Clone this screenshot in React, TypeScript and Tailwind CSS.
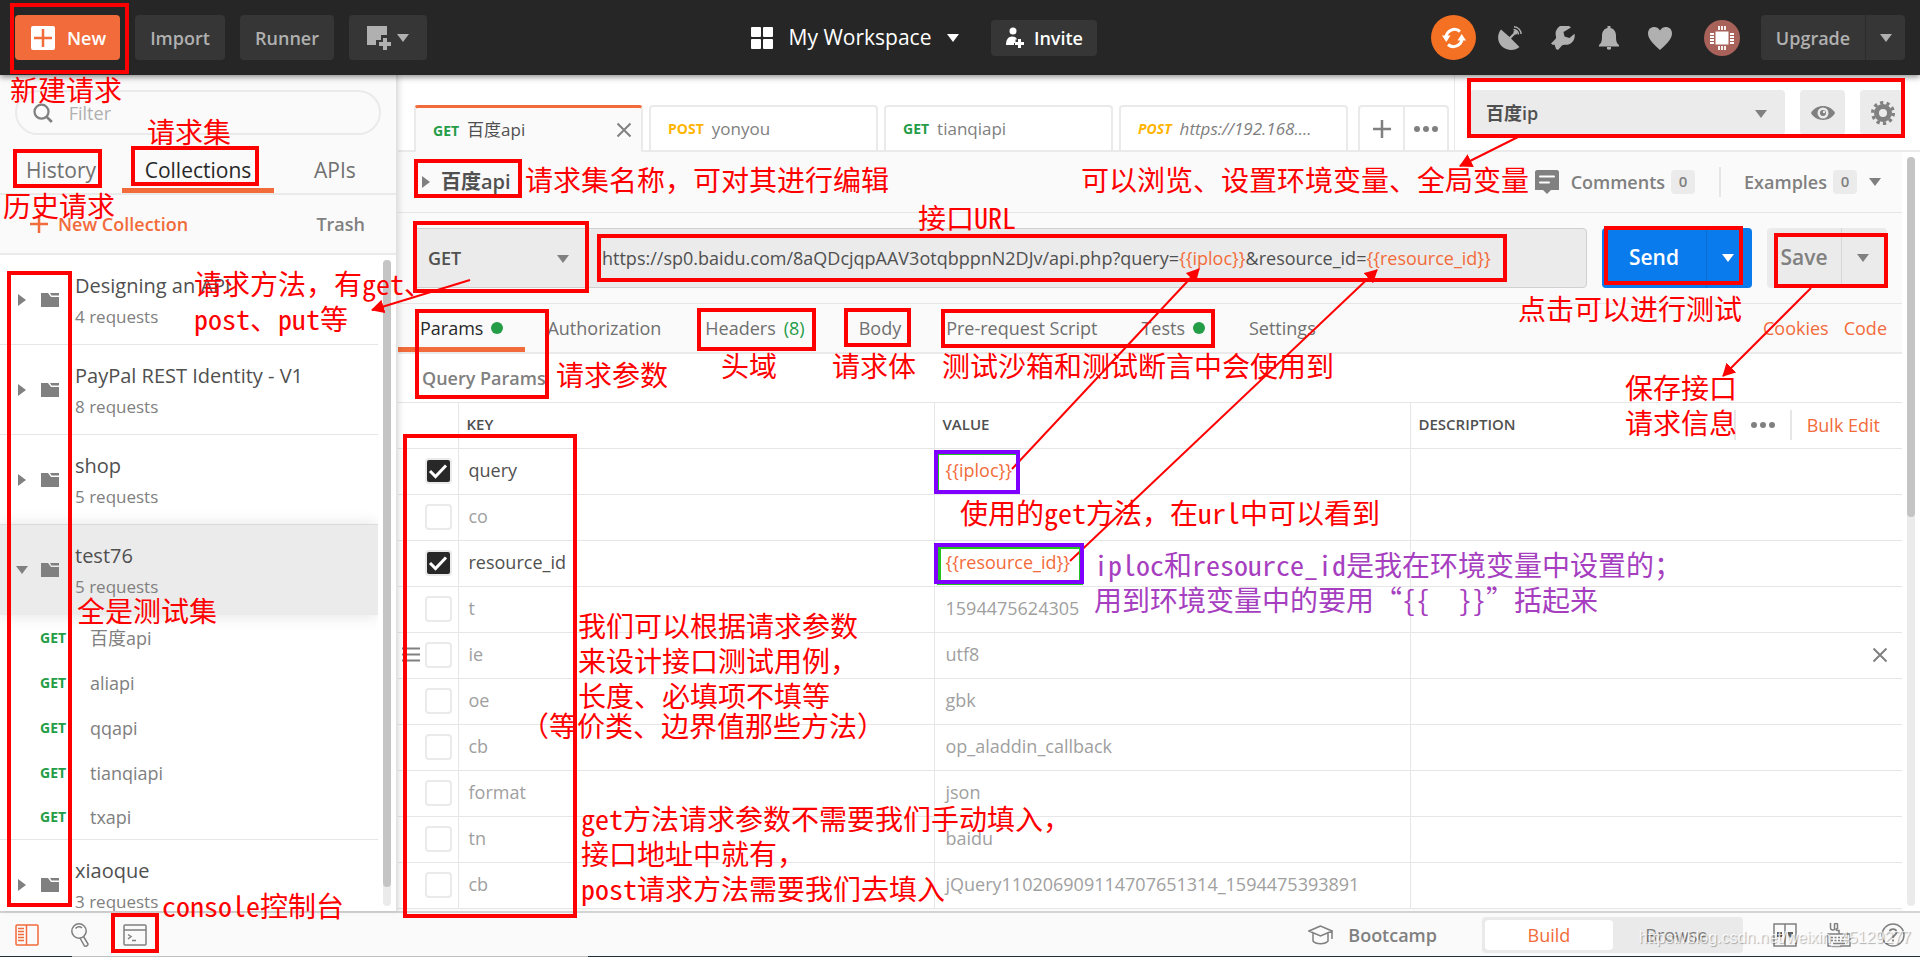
import { useState } from "react";
import type { ReactNode } from "react";

interface Collection {
    name: string;
    count: number;
    open?: boolean;
    requests?: string[];
}

interface Param {
    name: string;
    value: string;
    enabled?: boolean;
    active?: boolean;
}

interface Note {
    pos: string;
    lines: string[];
    tone?: string;
}

const collections: Collection[] = [
    { name: "Designing an API", count: 4 },
    { name: "PayPal REST Identity - V1", count: 8 },
    { name: "shop", count: 5 },
    { name: "test76", count: 5, open: true, requests: ["百度api", "aliapi", "qqapi", "tianqiapi", "txapi"] },
    { name: "xiaoque", count: 3 },
];

const initialParams: Param[] = [
    { name: "query", value: "{{iploc}}", enabled: true },
    { name: "co", value: "" },
    { name: "resource_id", value: "{{resource_id}}", enabled: true },
    { name: "t", value: "1594475624305" },
    { name: "ie", value: "utf8", active: true },
    { name: "oe", value: "gbk" },
    { name: "cb", value: "op_aladdin_callback" },
    { name: "format", value: "json" },
    { name: "tn", value: "baidu" },
    { name: "cb", value: "jQuery110206909114707651314_1594475393891" },
];

const notes: Note[] = [
    { pos: "left-[10px] top-[72px]", lines: ["新建请求"] },
    { pos: "left-[147px] top-[114px]", lines: ["请求集"] },
    { pos: "left-[3px] top-[188px]", lines: ["历史请求"] },
    { pos: "left-[525px] top-[162px]", lines: ["请求集名称，可对其进行编辑"] },
    { pos: "left-[1081px] top-[162px]", lines: ["可以浏览、设置环境变量、全局变量"] },
    { pos: "left-[918px] top-[200px]", lines: ["接口URL"] },
    { pos: "left-[194px] top-[266px]", lines: ["请求方法，有get、", "post、put等"] },
    { pos: "left-[556px] top-[357px]", lines: ["请求参数"] },
    { pos: "left-[721px] top-[348px]", lines: ["头域"] },
    { pos: "left-[832px] top-[348px]", lines: ["请求体"] },
    { pos: "left-[942px] top-[348px]", lines: ["测试沙箱和测试断言中会使用到"] },
    { pos: "left-[1518px] top-[291px]", lines: ["点击可以进行测试"] },
    { pos: "left-[1625px] top-[370px]", lines: ["保存接口", "请求信息"] },
    { pos: "left-[77px] top-[593px]", lines: ["全是测试集"] },
    { pos: "left-[960px] top-[495px]", lines: ["使用的get方法，在url中可以看到"] },
    { pos: "left-[1094px] top-[547px]", lines: ["iploc和resource_id是我在环境变量中设置的；", "用到环境变量中的要用“{{  }}”括起来"], tone: "text-[#a63fbf]" },
    { pos: "left-[578px] top-[608px]", lines: ["我们可以根据请求参数", "来设计接口测试用例，", "长度、必填项不填等"] },
    { pos: "left-[521px] top-[708px]", lines: ["（等价类、边界值那些方法）"] },
    { pos: "left-[581px] top-[801px]", lines: ["get方法请求参数不需要我们手动填入，", "接口地址中就有，", "post请求方法需要我们去填入"] },
    { pos: "left-[162px] top-[888px]", lines: ["console控制台"] },
];

// outer edges: left, top, right, bottom
const boxes = [
    [10, 3, 129, 74],
    [13, 149, 102, 188],
    [131, 146, 259, 186],
    [7, 271, 72, 907],
    [1467, 78, 1905, 138],
    [414, 159, 522, 198],
    [413, 221, 589, 293],
    [597, 234, 1507, 282],
    [415, 309, 549, 399],
    [697, 308, 816, 351],
    [844, 308, 911, 347],
    [941, 309, 1215, 348],
    [1604, 226, 1743, 285],
    [1774, 233, 1888, 288],
    [403, 434, 577, 918],
    [111, 913, 159, 953],
];

const arrows = [
    [1518, 137, 1460, 166],
    [470, 280, 372, 310],
    [1811, 288, 1723, 376],
    [1012, 469, 1199, 269],
    [1070, 561, 1377, 270],
];

function CaretDown({ className }: { className?: string }) {
    return (
        <svg width="12" height="8" viewBox="0 0 12 8" className={className} aria-hidden="true">
            <path d="M0 0h12L6 8z" fill="currentColor" />
        </svg>
    );
}

function CaretRight() {
    return (
        <svg width="8" height="12" viewBox="0 0 8 12" className="text-[#808080]" aria-hidden="true">
            <path d="M0 0v12l8-6z" fill="currentColor" />
        </svg>
    );
}

function CloseIcon() {
    return (
        <svg width="16" height="16" viewBox="0 0 16 16" fill="none" stroke="#808080" strokeWidth="2" aria-hidden="true">
            <path d="M1.500 1.500l13 13M14.500 1.500l-13 13" />
        </svg>
    );
}

function Dots() {
    return (
        <svg width="24" height="6" viewBox="0 0 24 6" fill="#808080" aria-hidden="true">
            <circle cx="3" cy="3" r="3" />
            <circle cx="12" cy="3" r="3" />
            <circle cx="21" cy="3" r="3" />
        </svg>
    );
}

function FolderIcon() {
    return (
        <svg width="18" height="14" viewBox="0 0 18 14" fill="#808080" aria-hidden="true">
            <path d="M0 0h7l3 4h8v10H0z" />
            <path d="M9 0h9v2.500h-7.500z" />
        </svg>
    );
}

function Header() {
    const dark = "flex items-center justify-center rounded bg-[#363636] font-semibold text-[#b0b0b0]";
    return (
        <header className="relative z-20 grid h-[75px] shrink-0 grid-cols-[1fr_auto_1fr] items-center bg-[#262626] px-[15px] text-lg shadow-[0_2px_6px_rgba(0,0,0,0.45)]">
            <div className="flex gap-[15px]">
                <button className="flex h-[45px] w-[105px] items-center gap-3 rounded bg-[#f26b3a] pl-4 font-semibold text-white">
                    <svg width="24" height="24" viewBox="0 0 24 24" aria-hidden="true">
                        <rect width="24" height="24" rx="2" fill="#fff" />
                        <path d="M12 3v18M3 12h18" stroke="#f26b3a" strokeWidth="2.500" />
                    </svg>
                    New
                </button>
                <button className={`${dark} h-[45px] w-[90px]`}>Import</button>
                <button className={`${dark} h-[45px] w-[94px]`}>Runner</button>
                <button aria-label="New window" className={`${dark} h-[45px] w-[78px] gap-1.5`}>
                    <svg width="24" height="24" viewBox="0 0 24 24" fill="#b0b0b0" aria-hidden="true">
                        <path d="M0 0h20v9h-6v5H9v5H0z" />
                        <path d="M16 12h4v4h4v4h-4v4h-4v-4h-4v-4h4z" />
                    </svg>
                    <CaretDown />
                </button>
            </div>

            <div className="mr-[72px] flex items-center">
                <button className="flex items-center gap-4 text-[21px] text-white">
                    <svg width="22" height="22" viewBox="0 0 22 22" fill="#fff" aria-hidden="true">
                        <rect width="10" height="10" rx="1" />
                        <rect x="12" width="10" height="10" rx="1" />
                        <rect y="12" width="10" height="10" rx="1" />
                        <rect x="12" y="12" width="10" height="10" rx="1" />
                    </svg>
                    My Workspace
                    <CaretDown />
                </button>
                <button className="ml-8 flex h-9 w-[106px] items-center justify-center gap-2.5 rounded bg-[#363636] font-semibold text-white">
                    <svg width="18" height="22" viewBox="0 0 18 22" fill="#fff" aria-hidden="true">
                        <circle cx="7" cy="4" r="3.500" />
                        <path d="M0 18c0-5 2-8.500 6-8.500 3 0 4.500 1 5 3H9.500v3.500H8V18z" />
                        <path d="M12 12h3v3h3v3h-3v3h-3v-3H9v-3h3z" />
                    </svg>
                    Invite
                </button>
            </div>

            <div className="flex items-center justify-end text-[#b0b0b0]">
                <button aria-label="Sync" className="flex h-[45px] w-[45px] items-center justify-center rounded-full bg-[#f47023]">
                    <svg width="24" height="24" viewBox="0 0 24 24" fill="none" stroke="#fff" strokeWidth="3" aria-hidden="true">
                        <path d="M4 11a8.500 8.500 0 0 1 14-5.500M20 13a8.500 8.500 0 0 1-14 5.500" />
                        <path d="M15.500 14.500H24l-4.300-6.500zM0 9.500h8.500L4.300 16z" fill="#fff" stroke="none" />
                    </svg>
                </button>
                <button aria-label="Capture" className="ml-[22px]">
                    <svg width="24" height="24" viewBox="0 0 24 24" fill="currentColor" aria-hidden="true">
                        <path d="M3 3.500C-1 8-1 16 4 20.500s13 4.500 17.500.500L13 12.500l4-4a2 2 0 1 0-1.500-1.500l-4 4z" />
                        <path d="M15.500 3.500a5.500 5.500 0 0 1 5 5M16 .8a8 8 0 0 1 7.200 7.200" fill="none" stroke="currentColor" strokeWidth="1.500" />
                    </svg>
                </button>
                <button aria-label="Settings" className="ml-[29px]">
                    <svg width="24" height="24" viewBox="0 0 24 24" fill="currentColor" aria-hidden="true">
                        <path d="M20 1.500A9 9 0 0 0 5 10.500c.2 1.200 0 2-1 3L0 17.500 2 19l1.500-.500L5 23l2 1 4-4.500c1-.800 2-.800 3-.700a9 9 0 0 0 9.500-11l-5 4.200-5-1.500-1-4.500z" />
                    </svg>
                </button>
                <button aria-label="Notifications" className="ml-6">
                    <svg width="20" height="24" viewBox="0 0 20 24" fill="currentColor" aria-hidden="true">
                        <path d="M8.500 0h3v2c4 1 5.500 4 5.500 8 0 5 .500 7 3 9v1.500H0V19c2.500-2 3-4 3-9 0-4 1.500-7 5.500-8zM8 21h4v2c-1 1-3 1-4 0z" />
                    </svg>
                </button>
                <button aria-label="Favourites" className="ml-7">
                    <svg width="26" height="24" viewBox="0 0 26 24" fill="currentColor" aria-hidden="true">
                        <path d="M13 24C9 20 1 14 1 7.500 1 0 10-1 13 4.500 16-1 25 0 25 7.500 25 14 17 20 13 24z" />
                    </svg>
                </button>
                <button aria-label="Account" className="ml-[31px] flex h-9 w-9 items-center justify-center rounded-full bg-[#a8625a]">
                    <svg width="24" height="24" viewBox="0 0 24 24" fill="#fff" stroke="#fff" strokeWidth="2" aria-hidden="true">
                        <rect x="6.500" y="6.500" width="11" height="11" />
                        <path d="M9 0v4M12 0v4M15 0v4M9 20v4M12 20v4M15 20v4M0 8h4M0 11h4M0 14h4M0 17h4M20 8h4M20 11h4M20 14h4M20 17h4" strokeWidth="1.800" />
                    </svg>
                </button>
                <div className="ml-[21px] flex h-[45px] rounded bg-[#363636]">
                    <button className="w-[105px] border-r border-[#2b2b2b] font-semibold">Upgrade</button>
                    <button aria-label="Upgrade options" className="flex w-[39px] items-center justify-center">
                        <CaretDown />
                    </button>
                </div>
            </div>
        </header>
    );
}

function CollectionRow({ item }: { item: Collection }) {
    return (
        <li className="border-b border-[#e6e6e6] last:border-b-0">
            <button
                className={
                    item.open
                        ? "relative flex h-[90px] w-full items-center bg-[#ebebeb] text-left shadow-[0_0_16px_rgba(0,0,0,0.12)]"
                        : "flex h-[89px] w-full items-center text-left"
                }
            >
                <span className="mr-[13px] ml-4 flex w-3 justify-center text-[#808080]">
                    {item.open ? <CaretDown /> : <CaretRight />}
                </span>
                <span className="w-[34px]">
                    <FolderIcon />
                </span>
                <span className="flex flex-col gap-px pt-[3px]">
                    <span className="text-[20px] leading-[30px] text-[#505050]">{item.name}</span>
                    <span className="text-[17px] leading-[30px] text-[#808080]">{item.count} requests</span>
                </span>
            </button>
            {item.requests && (
                <ul>
                    {item.requests.map((name) => (
                        <li key={name} className="flex h-[45px] items-center text-lg text-[#808080] last:h-11">
                            <span className="w-[90px] pl-10 text-[14px] font-bold text-[#249d47]">GET</span>
                            <a href="#request">{name}</a>
                        </li>
                    ))}
                </ul>
            )}
        </li>
    );
}

function Sidebar() {
    return (
        <aside className="relative z-10 flex w-[398px] shrink-0 flex-col border-r-2 border-[#e2e2e2] bg-[#fafafa] shadow-[2px_0_5px_rgba(0,0,0,0.1)]">
            <div className="px-[15px] pt-[15px]">
                <label className="flex h-[45px] items-center gap-4 rounded-full border-2 border-[#eaeaea] pl-4">
                    <svg width="22" height="22" viewBox="0 0 22 22" fill="none" stroke="#808080" strokeWidth="2.500" aria-hidden="true">
                        <circle cx="9.500" cy="9.500" r="7.800" />
                        <path d="M15 15l6 6" strokeWidth="3" />
                    </svg>
                    <input aria-label="Filter" placeholder="Filter" className="w-full bg-transparent text-lg outline-none placeholder:text-[#b0b0b0]" />
                </label>
            </div>
            <nav className="grid h-[60px] grid-cols-[1fr_152px_1fr] border-b-2 border-[#eaeaea] text-[21px] text-[#707070]">
                <button className="pt-3.5">History</button>
                <button className="border-b-[5px] border-[#f26b3a] pt-[18px] text-[#282828]">Collections</button>
                <button className="pt-3.5">APIs</button>
            </nav>
            <div className="flex h-[60px] shrink-0 items-center justify-between border-b-2 border-[#eaeaea] pr-[31px] pl-[30px] text-lg font-semibold">
                <button className="flex items-center gap-2.5 text-[#f26b3a]">
                    <svg width="18" height="18" viewBox="0 0 18 18" stroke="currentColor" strokeWidth="2.500" aria-hidden="true">
                        <path d="M9 0v18M0 9h18" />
                    </svg>
                    New Collection
                </button>
                <button className="text-[#808080]">Trash</button>
            </div>
            <div className="flex min-h-0 flex-1 bg-white">
                <ul className="flex-1 overflow-hidden">
                    {collections.map((item) => (
                        <CollectionRow key={item.name} item={item} />
                    ))}
                </ul>
                <div className="mx-[5px] my-[5px] w-2 rounded-full bg-[#ebebeb]">
                    <div className="h-[97%] rounded-full bg-[#c4c4c4]" />
                </div>
            </div>
        </aside>
    );
}

function RequestTab({ method, name, active, italic }: { method: string; name: string; active?: boolean; italic?: boolean }) {
    return (
        <button
            className={
                active
                    ? "-mb-0.5 flex h-[47px] w-[229px] items-center rounded-t border-x-2 border-t-[3px] border-x-[#eaeaea] border-t-[#f26b3a] bg-[#fafafa] px-[17px]"
                    : "flex h-[45px] w-[229px] items-center rounded-t border-x-2 border-t-2 border-[#eaeaea] bg-white px-[17px]"
            }
        >
            <span className={`text-[14px] font-bold ${method === "GET" ? "text-[#249d47]" : "text-[#ffb400]"} ${italic ? "italic" : ""}`}>{method}</span>
            <span className={`ml-2 text-[17px] ${active ? "text-[#505050]" : "text-[#808080]"} ${italic ? "italic" : ""}`}>{name}</span>
            {active && (
                <span className="-mr-2 ml-auto">
                    <CloseIcon />
                </span>
            )}
        </button>
    );
}

function TabBar() {
    return (
        <div className="flex h-[77px] shrink-0 border-b-2 border-[#eaeaea] bg-white">
            <div className="flex flex-1 items-end gap-[6px] border-r border-[#eaeaea] pr-[5px] pl-4">
                <RequestTab method="GET" name="百度api" active />
                <RequestTab method="POST" name="yonyou" />
                <RequestTab method="GET" name="tianqiapi" />
                <RequestTab method="POST" name="https://192.168...." italic />
                <div className="ml-auto flex h-[45px] rounded-t border-x-2 border-t-2 border-[#eaeaea]">
                    <button aria-label="New tab" className="flex w-[45px] items-center justify-center border-r-2 border-[#eaeaea]">
                        <svg width="18" height="18" viewBox="0 0 18 18" stroke="#808080" strokeWidth="2.500" aria-hidden="true">
                            <path d="M9 0v18M0 9h18" />
                        </svg>
                    </button>
                    <button aria-label="Tab options" className="flex w-[42px] items-center justify-center">
                        <Dots />
                    </button>
                </div>
            </div>
            <div className="flex items-start gap-[15px] px-[15px] pt-[15px]">
                <div className="relative">
                    <select aria-label="Environment" className="h-[45px] w-[315px] appearance-none rounded bg-[#ebebeb] px-4 text-lg font-semibold text-[#505050]">
                        <option>百度ip</option>
                    </select>
                    <CaretDown className="pointer-events-none absolute top-5 right-[18px] text-[#808080]" />
                </div>
                <button aria-label="Environment quick look" className="flex h-[45px] w-[45px] items-center justify-center rounded bg-[#ebebeb]">
                    <svg width="24" height="14" viewBox="0 0 24 14" aria-hidden="true">
                        <path d="M0 7C5-2.300 19-2.300 24 7c-5 9.300-19 9.300-24 0z" fill="#808080" />
                        <circle cx="12" cy="7" r="5.500" fill="#ebebeb" />
                        <circle cx="12" cy="7" r="3" fill="#808080" />
                        <circle cx="13" cy="6" r="1.200" fill="#ebebeb" />
                    </svg>
                </button>
                <button aria-label="Manage environments" className="flex h-[45px] w-[45px] items-center justify-center rounded bg-[#ebebeb]">
                    <svg width="24" height="24" viewBox="0 0 24 24" fill="none" stroke="#808080" aria-hidden="true">
                        <circle cx="12" cy="12" r="6.500" strokeWidth="5" />
                        <circle cx="12" cy="12" r="10.300" strokeWidth="3.400" strokeDasharray="3.200 3.270" />
                    </svg>
                </button>
            </div>
        </div>
    );
}

function Count({ children }: { children: ReactNode }) {
    return <span className="flex h-6 w-6 items-center justify-center rounded-sm bg-[#ebebeb] text-[15px]">{children}</span>;
}

function RequestHead() {
    return (
        <div className="flex h-[61px] items-center border-b border-[#e6e6e6] pr-[21px] pl-6 text-lg font-semibold text-[#808080]">
            <button className="flex items-center gap-[11px] text-[20px] text-[#505050]">
                <CaretRight />
                百度api
            </button>
            <button className="ml-auto flex items-center">
                <svg width="24" height="24" viewBox="0 0 24 24" aria-hidden="true">
                    <path d="M0 2C0 1 1 0 2 0h20c1 0 2 1 2 2v18h-8l-4 4-4-4H0z" fill="#808080" />
                    <path d="M5 6.500h14M5 12.500h9" stroke="#fff" strokeWidth="2" strokeLinecap="round" />
                </svg>
                <span className="mr-1.5 ml-3">Comments</span>
                <Count>0</Count>
            </button>
            <button className="ml-6 flex h-[30px] items-center border-l-2 border-[#e6e6e6] pl-[23px]">
                <span className="mr-1.5">Examples</span>
                <Count>0</Count>
                <CaretDown className="ml-3" />
            </button>
        </div>
    );
}

function UrlBar() {
    return (
        <div className="flex h-[91px] items-center border-b border-[#e6e6e6] px-[15px]">
            <div className="flex h-[60px] min-w-0 flex-1 rounded border border-[#d0d0d0] bg-[#ebebeb] text-lg text-[#505050]">
                <div className="relative">
                    <select aria-label="Method" className="h-full w-[174px] appearance-none bg-transparent px-3.5 font-semibold">
                        <option>GET</option>
                        <option>POST</option>
                        <option>PUT</option>
                    </select>
                    <CaretDown className="pointer-events-none absolute top-[26px] right-[19px] text-[#808080]" />
                </div>
                <div role="textbox" aria-label="Request URL" className="flex flex-1 items-center overflow-hidden pl-3.5 whitespace-nowrap">
                    https://sp0.baidu.com/8aQDcjqpAAV3otqbppnN2DJv/api.php?query=
                    <span className="text-[#f26b3a]">{"{{iploc}}"}</span>
                    &amp;resource_id=
                    <span className="text-[#f26b3a]">{"{{resource_id}}"}</span>
                </div>
            </div>
            <div className="ml-[15px] flex h-[60px] rounded bg-[#097bed] text-[21px] font-semibold text-white">
                <button className="w-[105px] border-r border-[#0a6dd0]">Send</button>
                <button aria-label="Send options" className="flex w-[45px] items-center pl-[15px]">
                    <CaretDown />
                </button>
            </div>
            <div className="ml-[15px] flex h-[60px] rounded bg-[#ebebeb] text-[21px] font-semibold text-[#808080]">
                <button className="w-[75px] border-r border-[#d8d8d8]">Save</button>
                <button aria-label="Save options" className="flex w-[45px] items-center pl-[15px]">
                    <CaretDown />
                </button>
            </div>
        </div>
    );
}

function RequestOptions() {
    const tab = "flex items-center gap-2 px-[22px]";
    const dot = <span className="h-3 w-3 rounded-full bg-[#249d47]" />;
    return (
        <div className="flex h-[50px] border-b-2 border-[#eaeaea] text-lg text-[#707070]">
            <button className={`${tab} border-b-[5px] border-[#f26b3a] pt-1 text-[#282828]`}>Params {dot}</button>
            <button className={tab}>Authorization</button>
            <button className={tab}>
                Headers <span className="text-[#249d47]">(8)</span>
            </button>
            <button className="flex items-center pr-[23px] pl-8">Body</button>
            <button className={tab}>Pre-request Script</button>
            <button className={tab}>Tests {dot}</button>
            <button className={tab}>Settings</button>
            <div className="ml-auto flex items-center gap-[15px] pr-[15px] text-[#f26b3a]">
                <a href="#cookies">Cookies</a>
                <a href="#code">Code</a>
            </div>
        </div>
    );
}

function ParamsTable() {
    const [params, setParams] = useState(initialParams);

    const toggle = (index: number) => {
        setParams(params.map((p, i) => (i === index ? { ...p, enabled: !p.enabled } : p)));
    };

    return (
        <div className="bg-white">
            <h2 className="flex h-12 items-center pl-6 text-lg font-semibold text-[#808080]">Query Params</h2>
            <table className="w-full table-fixed border-collapse text-left text-lg">
                <thead>
                    <tr className="h-[46px] border-y border-[#e6e6e6] text-[15px] text-[#505050]">
                        <th className="w-[60px] border-r border-[#e6e6e6]" aria-label="Enabled" />
                        <th className="border-r border-[#e6e6e6] pb-0.5 pl-2 font-semibold">KEY</th>
                        <th className="border-r border-[#e6e6e6] pb-0.5 pl-2 font-semibold">VALUE</th>
                        <th className="w-[492px] pr-[22px] pb-0.5 pl-2 font-semibold">
                            <div className="flex items-center">
                                DESCRIPTION
                                <button aria-label="Column options" className="ml-auto flex h-[30px] items-center border-x-2 border-[#e6e6e6] px-[15px]">
                                    <Dots />
                                </button>
                                <button className="pl-[15px] text-lg font-normal text-[#f26b3a]">Bulk Edit</button>
                            </div>
                        </th>
                    </tr>
                </thead>
                <tbody>
                    {params.map((p, i) => (
                        <tr key={i} className={`h-[46px] border-b border-[#e6e6e6] ${p.enabled ? "text-[#505050]" : "text-[#a0a0a0]"}`}>
                            <td className="border-r border-[#e6e6e6] pb-0.5">
                                <div className="flex items-center justify-end pr-[6px]">
                                    {p.active && (
                                        <svg width="18" height="15" viewBox="0 0 18 15" stroke="#808080" strokeWidth="2.200" className="mr-[5px]" aria-hidden="true">
                                            <path d="M0 1.500h18M0 7.500h18M0 13.500h18" />
                                        </svg>
                                    )}
                                    <label className="grid h-[26px] w-[27px] place-items-center">
                                        <input
                                            type="checkbox"
                                            aria-label={p.name}
                                            checked={!!p.enabled}
                                            onChange={() => toggle(i)}
                                            className="col-start-1 row-start-1 h-[26px] w-[27px] appearance-none rounded border-2 border-[#eaeaea] bg-white checked:bg-[#282828]"
                                        />
                                        {p.enabled && (
                                            <svg width="20" height="16" viewBox="0 0 20 16" fill="none" stroke="#fff" strokeWidth="3" className="pointer-events-none col-start-1 row-start-1" aria-hidden="true">
                                                <path d="M2 8l5.500 5.500L18 2.500" />
                                            </svg>
                                        )}
                                    </label>
                                </div>
                            </td>
                            <td className="border-r border-[#e6e6e6] pb-[3px] pl-2.5">{p.name}</td>
                            <td className={`border-r border-[#e6e6e6] pb-[3px] pl-[11px] ${p.value.startsWith("{{") ? "text-[#f26b3a]" : ""}`}>{p.value}</td>
                            <td className="pr-3.5 pb-0.5">
                                {p.active && (
                                    <button aria-label="Remove" className="ml-auto block">
                                        <CloseIcon />
                                    </button>
                                )}
                            </td>
                        </tr>
                    ))}
                </tbody>
            </table>
        </div>
    );
}

function Footer() {
    return (
        <footer className="flex h-[45px] shrink-0 items-center border-t-2 border-[#d4d4d4] bg-[#fafafa] px-[15px] text-lg text-[#808080]">
            <button aria-label="Toggle sidebar">
                <svg width="24" height="22" viewBox="0 0 24 22" fill="none" stroke="#f26b3a" strokeWidth="1.500" aria-hidden="true">
                    <rect x="1" y="1" width="22" height="20" rx="1" />
                    <path d="M11.500 1v20M3 4.500h6M3 7.500h6M3 10.500h6M3 13.500h6M3 16.500h6" />
                </svg>
            </button>
            <button aria-label="Find" className="ml-8">
                <svg width="20" height="24" viewBox="0 0 20 24" fill="none" stroke="#808080" strokeWidth="1.500" aria-hidden="true">
                    <circle cx="8" cy="8" r="7.200" />
                    <path d="M4.500 5.500c1.500-2 4.500-2.500 6.500-.5M9 15l4.500 8c2 .5 3.500-.5 3.500-2L12.500 13.500" />
                </svg>
            </button>
            <button aria-label="Console" className="ml-8">
                <svg width="24" height="22" viewBox="0 0 24 22" fill="none" stroke="#808080" strokeWidth="1.500" aria-hidden="true">
                    <rect x="1" y="1" width="22" height="20" rx="1" />
                    <path d="M1 6h22M5 10.500l3 2-3 2.500M9 16.500h4" />
                </svg>
            </button>
            <button className="mr-[45px] ml-auto flex items-center gap-[15px] font-semibold">
                <svg width="25" height="20" viewBox="0 0 25 20" fill="none" stroke="#808080" strokeWidth="1.500" aria-hidden="true">
                    <path d="M12.500 1L1 6l11.500 5L24 6zM5 8.500V16c2.500 3.500 12.500 3.500 15 0V8.500M24 6v8" />
                </svg>
                Bootcamp
            </button>
            <div className="flex h-9 rounded bg-[#eaeaea] p-[3px]">
                <button className="w-32 rounded bg-white text-[#f26b3a]">Build</button>
                <button className="w-[127px]">Browse</button>
            </div>
            <button aria-label="Two pane view" className="ml-[30px]">
                <svg width="24" height="24" viewBox="0 0 24 24" fill="none" stroke="#808080" strokeWidth="1.500" aria-hidden="true">
                    <path d="M1 1h22v22H1zM12 1v22" />
                    <path d="M4 9h5v5H4zM15 9h5v3l-2.500 3L15 12z" fill="#606060" stroke="none" />
                </svg>
            </button>
            <button aria-label="Keyboard shortcuts" className="ml-[30px]">
                <svg width="24" height="24" viewBox="0 0 24 24" fill="none" stroke="#808080" strokeWidth="1.500" aria-hidden="true">
                    <path d="M1 11h22v12H1zM12 11V7.500H10.500c-2 0-2-2 0-2V1.500c0-1.500-3-1.500-3 0V6c0 1.500-4 1.500-4-1V0" />
                    <path d="M4 14.500h16M4 17.500h16" strokeDasharray="2 1.500" />
                    <path d="M6 20.500h12" />
                </svg>
            </button>
            <button aria-label="Help" className="ml-[30px]">
                <svg width="24" height="24" viewBox="0 0 24 24" fill="none" stroke="#808080" strokeWidth="1.500" aria-hidden="true">
                    <circle cx="12" cy="12" r="11" />
                    <path d="M8.500 9.500c0-4.500 7-4.500 7 0 0 2.500-3.500 2.500-3.500 5.500M12 16.500v2" strokeWidth="1.800" />
                </svg>
            </button>
        </footer>
    );
}

// red marks and captions that lie over the app window
function Annotations() {
    return (
        <div className="pointer-events-none absolute inset-0 z-30 overflow-hidden">
            <svg width="1920" height="957" viewBox="0 0 1920 957" fill="none" className="max-w-none" aria-hidden="true">
                <defs>
                    <marker id="tip" markerWidth="14" markerHeight="14" refX="12" refY="7" orient="auto" markerUnits="userSpaceOnUse">
                        <path d="M0 0l13 7-13 7z" fill="#f00" />
                    </marker>
                </defs>
                {boxes.map(([l, t, r, b]) => (
                    <rect key={`${l}-${t}`} x={l + 2} y={t + 2} width={r - l - 4} height={b - t - 4} stroke="#f00" strokeWidth="4" />
                ))}
                {arrows.map(([x1, y1, x2, y2]) => (
                    <line key={`${x1}-${y1}`} x1={x1} y1={y1} x2={x2} y2={y2} stroke="#f00" strokeWidth="2" markerEnd="url(#tip)" />
                ))}
                <rect x="937" y="453" width="81" height="39" stroke="#22c322" strokeWidth="4" />
                <rect x="936" y="452" width="82" height="40" stroke="#8000ff" strokeWidth="4" />
                <rect x="939" y="547" width="142" height="36" stroke="#22c322" strokeWidth="4" />
                <rect x="936" y="545" width="146" height="37" stroke="#8000ff" strokeWidth="4" />
            </svg>
            {notes.map((note) => (
                <p
                    key={note.pos}
                    className={`absolute font-['Noto_Sans_Mono_CJK_SC','Noto_Sans_CJK_SC',sans-serif] text-[28px] leading-[35px] font-light whitespace-pre ${note.pos} ${note.tone ?? "text-[#ff0000]"}`}
                >
                    {note.lines.join("\n")}
                </p>
            ))}
            <p className="absolute right-[9px] bottom-[7px] font-['Liberation_Sans',sans-serif] text-[16px] text-white/80 [text-shadow:1px_1px_1px_rgba(0,0,0,0.3)]">
                https://blog.csdn.net/weixin_45129277
            </p>
        </div>
    );
}

export default function App() {
    return (
        <div className="relative flex h-screen flex-col overflow-hidden bg-white font-['Open_Sans','Noto_Sans_CJK_SC',sans-serif]">
            <Header />
            <div className="flex min-h-0 flex-1">
                <Sidebar />
                <main className="flex min-w-0 flex-1 flex-col">
                    <TabBar />
                    <div className="flex min-h-0 flex-1">
                        <section className="min-w-0 flex-1 overflow-hidden bg-[#fafafa]">
                            <RequestHead />
                            <UrlBar />
                            <RequestOptions />
                            <ParamsTable />
                        </section>
                        <div className="mx-[5px] my-[5px] w-2 rounded-full bg-[#ebebeb]">
                            <div className="h-[48%] rounded-full bg-[#c4c4c4]" />
                        </div>
                    </div>
                </main>
            </div>
            <Footer />
            <div className="flex h-px shrink-0">
                <div className="w-[72px] bg-[#20303a]" />
                <div className="w-[516px] bg-[#c0c0c0]" />
                <div className="flex-1 bg-[#20303a]" />
            </div>
            <Annotations />
        </div>
    );
}
